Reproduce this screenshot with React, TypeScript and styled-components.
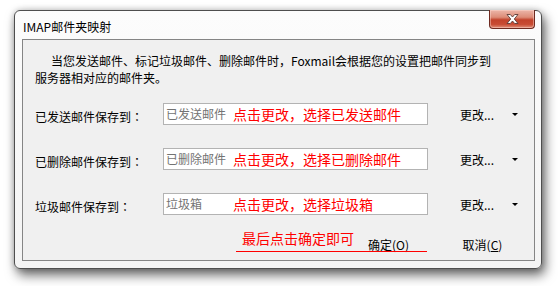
import React from "react";
import styled, { createGlobalStyle } from "styled-components";

const Global = createGlobalStyle`
  html, body { margin: 0; padding: 0; background: #ffffff; }
  body { font-family: "Noto Sans CJK SC", "Noto Sans", sans-serif; font-size: 12px; color: #000; }
`;

const Page = styled.div`
  width: 558px;
  height: 286px;
  padding: 10px 0 0 14px;
  box-sizing: border-box;
`;

const Window = styled.div`
  width: 528px;
  height: 259px;
  box-sizing: border-box;
  border: 1px solid #4e4e4e;
  border-radius: 6px;
  background: linear-gradient(#fcfcfc, #f4f4f4);
  box-shadow: 3px 6px 12px rgba(0, 0, 0, 0.6), 0 0 6px rgba(0, 0, 0, 0.2);
  display: flex;
  flex-direction: column;
  padding: 0 6px 7px 7px;
`;

const TitleBar = styled.div`
  height: 28px;
  display: flex;
  align-items: flex-start;
  justify-content: space-between;
`;

const Title = styled.div`
  padding: 8px 0 0 1px;
  font-size: 12px;
  line-height: 16px;
`;

const CloseButton = styled.div`
  width: 46px;
  height: 19px;
  margin-top: -1px;
  box-sizing: border-box;
  border: 1px solid #6e2a20;
  border-top: none;
  border-radius: 0 0 4px 4px;
  background: linear-gradient(#ecb6a9 0%, #dd8c78 40%, #c2422b 55%, #c84c34 80%, #e0907a 100%);
  box-shadow: inset 0 0 0 1px rgba(255, 220, 210, 0.45);
  display: flex;
  align-items: center;
  justify-content: center;
`;

const Panel = styled.div`
  flex: 1;
  border: 1px solid #858585;
  background: #f0f0f0;
  display: flex;
  flex-direction: column;
  padding: 12px 0 0 12px;
  position: relative;
`;

const Intro = styled.div`
  font-size: 12px;
  line-height: 17px;
  white-space: nowrap;
`;

const IntroLine = styled.div<{ $indent?: boolean }>`
  padding-left: ${(p) => (p.$indent ? 16 : 0)}px;
`;

const Rows = styled.div`
  margin-top: 17px;
  display: flex;
  flex-direction: column;
  gap: 23px;
`;

const Row = styled.div`
  display: grid;
  grid-template-columns: 128px 297px 52px 12px;
  align-items: center;
  height: 22px;
`;

const Label = styled.div`
  padding-top: 5px;
  line-height: 16px;
  white-space: nowrap;
`;

const Colon = styled.span`
  font-family: "Noto Sans CJK TC", "Noto Sans CJK SC", sans-serif;
`;

const Field = styled.div`
  position: relative;
  height: 22px;
  width: 265px;
  box-sizing: border-box;
  border: 1px solid #b3b3b3;
  background: #fff;
  padding-left: 2px;
  display: flex;
  align-items: center;
  color: #737373;
  line-height: 16px;
`;

const RedNote = styled.span`
  position: absolute;
  left: 69px;
  top: 1px;
  color: #ff0000;
  font-size: 14px;
  line-height: 18px;
  white-space: nowrap;
`;

const Change = styled.div`
  padding-top: 2px;
  line-height: 16px;
`;

const Arrow = styled.div`
  width: 0;
  height: 0;
  border-left: 3px solid transparent;
  border-right: 3px solid transparent;
  border-top: 3px solid #000;
  margin-top: 1px;
`;

const Footer = styled.div`
  margin-top: 17px;
  height: 24px;
  display: flex;
  justify-content: flex-end;
  padding-right: 14px;
  gap: 19px;
`;

const Button = styled.div`
  width: 75px;
  height: 24px;
  display: flex;
  align-items: center;
  justify-content: center;
  line-height: 16px;
  padding-top: 2px;
  box-sizing: border-box;
`;

const Key = styled.span`
  text-decoration: underline;
  text-underline-offset: 1px;
`;

const Annotation = styled.div`
  position: absolute;
  left: 213px;
  top: 189px;
  width: 191px;
  height: 23px;
  border-bottom: 1px solid #ff0000;
  box-sizing: border-box;
  padding-left: 6px;
  color: #ff0000;
  font-size: 14px;
  line-height: 18px;
  white-space: nowrap;
`;

const rows = [
  { label: "已发送邮件保存到", value: "已发送邮件", note: "点击更改，选择已发送邮件" },
  { label: "已删除邮件保存到", value: "已删除邮件", note: "点击更改，选择已删除邮件" },
  { label: "垃圾邮件保存到", value: "垃圾箱", note: "点击更改，选择垃圾箱" },
];

export default function App() {
  return (
    <>
      <Global />
      <Page>
        <Window>
          <TitleBar>
            <Title>IMAP邮件夹映射</Title>
            <CloseButton>
              <svg width="17" height="12" viewBox="0 0 17 12">
                <path
                  d="M3 1.5 L6.3 1.5 L8.5 4 L10.7 1.5 L14 1.5 L10.3 6 L14 10.5 L10.7 10.5 L8.5 8 L6.3 10.5 L3 10.5 L6.7 6 Z"
                  fill="#ffffff"
                  stroke="#5a3a35"
                  strokeWidth="0.9"
                  strokeLinejoin="round"
                />
              </svg>
            </CloseButton>
          </TitleBar>
          <Panel>
            <Intro>
              <IntroLine $indent>
                当您发送邮件、标记垃圾邮件、删除邮件时，Foxmail会根据您的设置把邮件同步到
              </IntroLine>
              <IntroLine>服务器相对应的邮件夹。</IntroLine>
            </Intro>
            <Rows>
              {rows.map((r) => (
                <Row key={r.label}>
                  <Label>
                    {r.label}
                    <Colon>：</Colon>
                  </Label>
                  <Field>
                    {r.value}
                    <RedNote>{r.note}</RedNote>
                  </Field>
                  <Change>更改...</Change>
                  <Arrow />
                </Row>
              ))}
            </Rows>
            <Footer>
              <Button>
                确定(<Key>O</Key>)
              </Button>
              <Button>
                取消(<Key>C</Key>)
              </Button>
            </Footer>
            <Annotation>最后点击确定即可</Annotation>
          </Panel>
        </Window>
      </Page>
    </>
  );
}
